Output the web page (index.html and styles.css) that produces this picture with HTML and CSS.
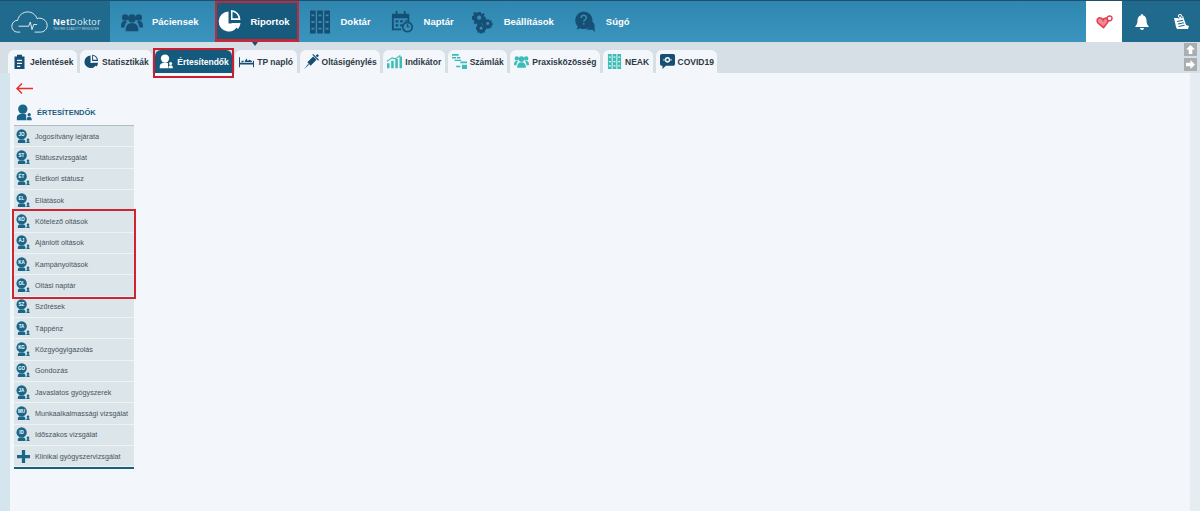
FILE: index.html
```html
<!DOCTYPE html>
<html lang="en">

<head>
	<title>NetDoktor</title>
	<link rel="stylesheet" href="styles.css">
</head>

<body>
	<svg class="defs" width="0" height="0">
		<symbol id="person" viewBox="0 0 20 20">
			<circle cx="8" cy="6" r="5.500" />
			<path d="M1 19v-3c0-3 3-4.500 7-4.500 2 0 3 .3 4 .8V19z" />
			<circle cx="15.500" cy="12.500" r="2" />
			<path d="M12.500 19c0-3 1-4 3-4s3 1 3 4z" />
		</symbol>
		<symbol id="badge" viewBox="0 0 16 16">
			<circle cx="6" cy="5.800" r="5.500" />
			<path d="M2 15v-1.500c0-1.500 1-2 2-2.200h4c1 .2 2 .7 2 2.200V15z" />
			<circle cx="12.800" cy="11.500" r="1.400" />
			<path d="M11 15c0-1.500.6-2.300 1.800-2.300s1.800.8 1.800 2.300z" />
		</symbol>
		<symbol id="people" viewBox="0 0 24 20">
			<circle cx="12" cy="6" r="4.500" />
			<circle cx="4.500" cy="5" r="3.500" />
			<circle cx="19.500" cy="5" r="3.500" />
			<path d="M5 20c0-6 2-9 7-9s7 3 7 9z" />
			<path d="M0 16c0-5 1-7 4.500-7 1 0 1.500.2 2 .5C4.500 12 4 14 4 16zM24 16c0-5-1-7-4.500-7-1 0-1.500.2-2 .5 2 2.500 2.500 4.500 2.500 6.500z" />
		</symbol>
		<symbol id="pie" viewBox="0 0 24 24">
			<path d="M10.500 2.500a10 10 0 1 0 10 12h-10z" />
			<path d="M13 1a10 10 0 0 1 9.500 10H13zM14.500 2.800V9.300H20.500A8 8 0 0 0 14.500 2.800z" fill-rule="evenodd" />
			<path d="M13 14h9.500a10 10 0 0 1-2.500 6z" />
		</symbol>
		<symbol id="binders" viewBox="0 0 21 24">
			<path d="M0 0h6v24H0zM1.500 4v2h3V4zM1.500 11v2h3v-2zM1.500 18v2h3v-2zM7.500 0h6v24h-6zM9 4v2h3V4zM9 11v2h3v-2zM9 18v2h3v-2zM15 0h6v24h-6zM16.500 4v2h3V4zM16.500 11v2h3v-2zM16.500 18v2h3v-2z" fill-rule="evenodd" />
		</symbol>
		<symbol id="calendar" viewBox="0 0 24 24">
			<path d="M1 3h4V0h2v3h7V0h2v3h4v9h-2V8H3v11h8v2H1z" />
			<path d="M5 10h3v2.500H5zM10 10h3v2.500h-3zM15 10h3v1.500h-3zM5 14.500h3V17H5zM10 14.500h3V17h-3z" />
			<path d="M18 11.500a6 6 0 1 0 .01 0zM18 13.300a4.200 4.200 0 1 1-.01 0zM17.300 14.500v3.300h3v-1.300h-1.600v-2z" fill-rule="evenodd" />
		</symbol>
		<symbol id="gear" viewBox="0 0 24 24">
			<path d="M8.500 0h7l.6 3.200 1.900.9 2.700-1.800 3 3-1.800 2.700.9 1.900 3.200.6v7l-3.200.6-.9 1.900 1.800 2.700-3 3-2.700-1.800-1.900.9-.6 3.200h-7l-.6-3.200-1.900-.9-2.700 1.800-3-3 1.800-2.700-.9-1.900L-3 15.500v-7l3.200-.6.9-1.900-1.800-2.700 3-3L8 2.100l.5-.2zM12 7.500a4.500 4.500 0 1 0 .01 0z" transform="translate(2.400 2.400) scale(.8)" fill-rule="evenodd" />
		</symbol>
		<symbol id="help" viewBox="0 0 24 24">
			<path d="M18 10.500c1 2.500 0 6-2.500 8-1 .8-2 1.300-3 1.500l2 .8h5.500l3 2.700-.8-4.500c1.200-3-.5-7-4.200-8.500z" />
			<path d="M10 0a10 10 0 0 1 0 20c-1.500 0-3-.3-4-1l-4 1.500 1.200-3.500A10 10 0 0 1 10 0z" />
			<path d="M7 7.500c0-2 1.300-3 3-3s3 1 3 2.700c0 2.300-3 2.300-3 4.500M10 13v2" fill="none" stroke="#3a94bd" stroke-width="1.400" />
		</symbol>
		<symbol id="doc" viewBox="0 0 14 18">
			<path d="M1 3h3V1h6v2h3v15H1zM4 7v1.500h6V7zM4 10.500V12h6v-1.500zM4 14v1.500h4V14z" fill-rule="evenodd" />
		</symbol>
		<symbol id="bed" viewBox="0 0 18 14">
			<path d="M0 2h1.200v6.500h15.600V6H18v8h-1.200v-3.500H1.200V14H0z" />
			<path d="M3 6h2.500v2H3zM7 6.500l2-3 1.500 3 2-1.500 3 1.500v1H7z" />
		</symbol>
		<symbol id="syringe" viewBox="0 0 18 18">
			<path d="M0 18l5-6 1 1zM4 10l7-7 4 4-7 7zM10 1l1-1 7 7-1 1zM14 2l2-2 2 2-2 2z" />
		</symbol>
		<symbol id="chart" viewBox="0 0 18 16">
			<path d="M0 10h3v6H0zM5 7h3v9H5zM10 5h3v11h-3zM15 2h3v14h-3zM0 7l6-4 4 1 6-4v1.500l-6 4-4-1-6 4z" />
		</symbol>
		<symbol id="bills" viewBox="0 0 18 18">
			<path d="M0 0h8v2H0zM0 3.500h5v2H0zM6 3.500h4v2H6zM3 7h8v1.500H3zM10 9h8v2h-8zM5 14h5v2H5zM12 13h6v5h-6z" />
		</symbol>
		<symbol id="chat" viewBox="0 0 18 18">
			<path d="M2 0h14a2 2 0 0 1 2 2v10a2 2 0 0 1-2 2H7l-4 4v-4H2a2 2 0 0 1-2-2V2a2 2 0 0 1 2-2zM9 3.500a3.500 3.500 0 1 0 .01 0zM9 5.500a1.500 1.500 0 1 1-.01 0zM4 6.200v1.500h2V6.200zM12 6.200v1.500h2V6.200z" fill-rule="evenodd" />
		</symbol>
	</svg>

	<!-- Top menu -->
	<header class="topbar">
		<a class="logo">
			<svg class="logo-cloud" viewBox="0 0 44 26" fill="none" stroke="#fff" stroke-width="1">
				<path d="M11 25H8C3 25 1 21 1 18c0-4 3-7 7-7 1-6 6-10 12-10 5 0 9 3 11 8 1-.5 2-.5 3-.5 5 0 9 4 9 8.500 0 5-4 8-8 8H28" />
				<path d="M9 18h12l2-5 2 9 2-6h4" />
			</svg>
			<span class="logo-text">
				<span class="logo-name"><b>Net</b>Doktor</span>
				<span class="logo-sub">TESTRE SZABOTT RENDSZER</span>
			</span>
		</a>
		<nav class="menu">
			<a class="menu-item menu-paciens"><svg class="menu-icon"><use href="#people" /></svg>Páciensek</a>
			<a class="menu-item menu-active"><svg class="menu-icon"><use href="#pie" /></svg>Riportok</a>
			<a class="menu-item menu-doktar"><svg class="menu-icon"><use href="#binders" /></svg>Doktár</a>
			<a class="menu-item menu-naptar"><svg class="menu-icon"><use href="#calendar" /></svg>Naptár</a>
			<a class="menu-item menu-beall">
				<svg class="menu-icon" viewBox="0 0 22 24">
					<use href="#gear" width="15" height="15" x="0" y="0" />
					<use href="#gear" width="11" height="11" x="11" y="8" />
					<use href="#gear" width="11" height="11" x="4" y="13" />
				</svg>Beállítások</a>
			<a class="menu-item menu-sugo"><svg class="menu-icon"><use href="#help" /></svg>Súgó</a>
		</nav>
		<div class="top-right">
			<a class="top-white">
				<svg class="heart" viewBox="0 0 18 14" fill="none" stroke="#e5394c" stroke-width="1.500">
					<path d="M8 13L2 8C0 5 2 2 4.500 2.500 6 2.500 7 4 7.500 5 8 3.500 9.500 2.500 11 3c2 1 2 3 1 5z" fill="#e5394c" fill-opacity=".6" />
					<path d="M10 4l3-3c1.500-1 4 0 4 2s-2 3-3.500 2.500L12 7" />
				</svg>
			</a>
			<a class="top-dark">
				<svg class="bell" viewBox="0 0 14 16" fill="#fff">
					<path d="M7 0c1 0 1 .8 1 1.200 2.500.6 3.500 2.800 3.500 5.300 0 3 1 4.500 2.500 6.500H0c1.500-2 2.500-3.500 2.500-6.500C2.500 4 3.500 1.800 6 1.200 6 .8 6 0 7 0zM5 14h4c0 1-1 2-2 2s-2-1-2-2z" />
				</svg>
			</a>
			<a class="top-dark">
				<svg class="note" viewBox="0 0 16 16" fill="#fff">
					<path d="M1 4l9-2 3 9 3 1-1 3H4l-1-2zM5 2.500a2 2 0 0 1 4-1L9.500 4l-1 .2-.5-2.500a1 1 0 0 0-2 .5L6.500 4.500l-1 .2zM4 7l.2 1 6-1.300-.2-1zM4.800 9.500l.2 1 6-1.300-.2-1zM5.500 12l.2 1 6-1.300-.2-1z" fill-rule="evenodd" />
				</svg>
			</a>
		</div>
	</header>

	<!-- Tabs -->
	<div class="tabbar">
		<a class="tab"><svg class="tab-icon dark"><use href="#doc" /></svg>Jelentések</a>
		<a class="tab"><svg class="tab-icon dark"><use href="#pie" /></svg>Statisztikák</a>
		<a class="tab tab-active"><svg class="tab-icon white"><use href="#person" /></svg>Értesítendők</a>
		<a class="tab"><svg class="tab-icon dark"><use href="#bed" /></svg>TP napló</a>
		<a class="tab"><svg class="tab-icon dark"><use href="#syringe" /></svg>Oltásigénylés</a>
		<a class="tab"><svg class="tab-icon teal"><use href="#chart" /></svg>Indikátor</a>
		<a class="tab"><svg class="tab-icon teal"><use href="#bills" /></svg>Számlák</a>
		<a class="tab"><svg class="tab-icon teal"><use href="#people" /></svg>Praxisközösség</a>
		<a class="tab"><svg class="tab-icon teal"><use href="#binders" /></svg>NEAK</a>
		<a class="tab"><svg class="tab-icon dark"><use href="#chat" /></svg>COVID19</a>
		<div class="tab-scroll">
			<span class="scroll-btn">
				<svg viewBox="0 0 10 10" fill="#fff"><path d="M5 0l5 5H7v5H3V5H0z" /></svg>
			</span>
			<span class="scroll-btn">
				<svg viewBox="0 0 10 10" fill="#fff"><path d="M5 0l5 5-5 5V7H0V3h5z" /></svg>
			</span>
		</div>
	</div>

	<!-- Content -->
	<main class="content">
		<svg class="back" viewBox="0 0 17 11" fill="none" stroke="#e8302a" stroke-width="1.500">
			<path d="M6 .5L1 5.500l5 5M1 5.500h16" />
		</svg>
		<div class="side-title">
			<svg class="title-icon"><use href="#person" /></svg>
			<span>ÉRTESÍTENDŐK</span>
		</div>
		<div class="side-list">
			<a class="row"><span class="ico"><svg><use href="#badge" /></svg><i>JO</i></span>Jogosítvány lejárata</a>
			<a class="row"><span class="ico"><svg><use href="#badge" /></svg><i>ST</i></span>Státuszvizsgálat</a>
			<a class="row"><span class="ico"><svg><use href="#badge" /></svg><i>ÉT</i></span>Életkori státusz</a>
			<a class="row"><span class="ico"><svg><use href="#badge" /></svg><i>EL</i></span>Ellátások</a>
			<div class="row-group">
				<a class="row"><span class="ico"><svg><use href="#badge" /></svg><i>KÖ</i></span>Kötelező oltások</a>
				<a class="row"><span class="ico"><svg><use href="#badge" /></svg><i>AJ</i></span>Ajánlott oltások</a>
				<a class="row"><span class="ico"><svg><use href="#badge" /></svg><i>KA</i></span>Kampányoltások</a>
				<a class="row"><span class="ico"><svg><use href="#badge" /></svg><i>OL</i></span>Oltási naptár</a>
			</div>
			<a class="row"><span class="ico"><svg><use href="#badge" /></svg><i>SZ</i></span>Szűrések</a>
			<a class="row"><span class="ico"><svg><use href="#badge" /></svg><i>TA</i></span>Táppénz</a>
			<a class="row"><span class="ico"><svg><use href="#badge" /></svg><i>KG</i></span>Közgyógyigazolás</a>
			<a class="row"><span class="ico"><svg><use href="#badge" /></svg><i>GO</i></span>Gondozás</a>
			<a class="row"><span class="ico"><svg><use href="#badge" /></svg><i>JA</i></span>Javaslatos gyógyszerek</a>
			<a class="row"><span class="ico"><svg><use href="#badge" /></svg><i>MU</i></span>Munkaalkalmassági vizsgálat</a>
			<a class="row"><span class="ico"><svg><use href="#badge" /></svg><i>ID</i></span>Időszakos vizsgálat</a>
			<a class="row"><span class="ico"><svg class="plus" viewBox="0 0 12 12"><path d="M4.500 0h3v4.500H12v3H7.500V12h-3V7.500H0v-3h4.500z" /></svg></span>Klinikai gyógyszervizsgálat</a>
		</div>
	</main>
</body>

</html>
```

FILE: styles.css
```css
/* Page */
html,
body {
	height: 100%;
}

body {
	margin: 0;
	font-family: "Liberation Sans", Arial, sans-serif;
	background-color: #f3f6fb;
	overflow: hidden;
	display: flex;
	flex-direction: column;
}

.defs {
	display: block;
	height: 0;
}

/* Top menu */
.topbar {
	display: flex;
	height: 42px;
	flex: none;
	background: linear-gradient(#2f87b0, #3a94bd);
	border-top: 1px solid #1f4f6e;
	box-sizing: border-box;
	position: relative;
	z-index: 1;
}

.logo {
	width: 110px;
	flex: none;
	display: flex;
	align-items: center;
	gap: 5px;
	padding-left: 11px;
	box-sizing: border-box;
	background-color: #1f6a8d;
	color: #fff;
}

.logo-cloud {
	width: 37px;
	height: 22px;
	flex: none;
}

.logo-text {
	display: flex;
	flex-direction: column;
	margin-top: 3px;
}

.logo-name {
	font-size: 9.5px;
	letter-spacing: .5px;
	color: #d7e6ee;
}

.logo-name b {
	color: #fff;
}

.logo-sub {
	font-size: 3px;
	letter-spacing: .1px;
	color: #bcd3df;
	white-space: nowrap;
}

.menu {
	display: flex;
	flex: 1;
	padding-left: 11px;
}

.menu-item {
	display: flex;
	align-items: center;
	gap: 11px;
	margin-right: 20px;
	color: #fff;
	font-size: 9.5px;
	font-weight: bold;
}

.menu-icon {
	width: 22px;
	height: 24px;
	fill: #174f74;
}

.menu-paciens {
	gap: 9px;
	margin-right: 17px;
}

.menu-active {
	width: 84px;
	height: 41px;
	box-sizing: border-box;
	padding-left: 1px;
	margin-right: 11px;
	gap: 8px;
	background-color: #165a7d;
	border: 2px solid #c22a3a;
	border-bottom-width: 3px;
	position: relative;
}

.menu-active .menu-icon {
	width: 24px;
	height: 24px;
	fill: #fff;
}

/* Little pointer under the active menu */
.menu-active::after {
	content: "";
	position: absolute;
	left: 35px;
	bottom: -10px;
	border: 3px solid transparent;
	border-top: 4px solid #1f4f6e;
}

.menu-doktar {
	gap: 10px;
}

.menu-doktar .menu-icon {
	width: 20px;
}

.menu-naptar {
	margin-right: 18px;
}

.menu-beall {
	margin-right: 21px;
}

.menu-beall .menu-icon,
.menu-sugo .menu-icon {
	width: 21px;
}

.menu-sugo {
	gap: 10px;
}

.top-right {
	display: flex;
	flex: none;
}

.top-white,
.top-dark {
	display: flex;
	align-items: center;
	justify-content: center;
}

.top-white {
	width: 36px;
	background-color: #fff;
}

.top-dark {
	width: 39px;
	background-color: #1f6a8d;
}

.heart {
	width: 17px;
	height: 14px;
}

.bell {
	width: 14px;
	height: 16px;
}

.note {
	width: 16px;
	height: 16px;
}

/* Tabs */
.tabbar {
	display: flex;
	align-items: flex-end;
	flex: none;
	gap: 3px;
	height: 31px;
	padding-left: 8px;
	background-color: #d5dfe5;
	position: relative;
}

.tab {
	display: flex;
	align-items: center;
	gap: 3px;
	height: 23px;
	box-sizing: border-box;
	padding: 0 3.500px 0 4px;
	background-color: #f3f6fb;
	border-radius: 6px 6px 0 0;
	color: #2d3a45;
	font-size: 8.5px;
	font-weight: bold;
	white-space: nowrap;
}

.tab-active {
	position: relative;
	background-color: #15597c;
	color: #fff;
}

/* Red marker round the active tab */
.tab-active::after {
	content: "";
	position: absolute;
	inset: -2px -2px -5px;
	border: 2px solid #c8202f;
}

.tab-icon {
	width: 15px;
	height: 15px;
}

.dark {
	fill: #174f74;
}

.white {
	fill: #fff;
}

.teal {
	fill: #3bbcb4;
}

.tab-scroll {
	position: absolute;
	right: 3px;
	top: 1px;
	display: flex;
	flex-direction: column;
	gap: 2px;
}

.scroll-btn {
	display: flex;
	align-items: center;
	justify-content: center;
	width: 13px;
	height: 13px;
	background-color: #a9aeb1;
}

.scroll-btn svg {
	width: 9px;
	height: 9px;
}

/* Content */
.content {
	flex: 1;
	margin: 0 10px;
	padding: 10px 0 0 4px;
	box-shadow: -10px 0 0 #d5e5ee, 10px 0 0 #e6edf2;
}

.back {
	display: block;
	width: 17px;
	height: 11px;
	margin-left: 2px;
}

.side-title {
	display: flex;
	align-items: center;
	gap: 4px;
	height: 26px;
	margin-top: 5px;
	padding-left: 2px;
	color: #1d5d7e;
	font-size: 7.5px;
	font-weight: bold;
}

.title-icon {
	width: 17px;
	height: 17px;
	fill: #1a6688;
}

/* Side list */
.side-list {
	width: 120px;
	background-color: #dbe5ea;
	border-top: 1px solid #aebdc6;
	border-bottom: 2px solid #1d5d7e;
}

.row {
	display: flex;
	align-items: center;
	gap: 4px;
	height: 21.33px;
	box-sizing: border-box;
	padding-left: 2px;
	border-bottom: 1px solid #eef3f6;
	color: #4a545c;
	font-size: 7.2px;
	white-space: nowrap;
}

.row-group {
	outline: 2px solid #cf2431;
}

.ico {
	position: relative;
	width: 15px;
	height: 15px;
	flex: none;
}

.ico svg {
	display: block;
	width: 15px;
	height: 15px;
	fill: #1a6688;
}

.ico svg.plus {
	width: 13px;
	height: 13px;
	margin: 1px;
}

.ico i {
	position: absolute;
	left: 0;
	top: 1px;
	width: 11px;
	text-align: center;
	color: #fff;
	font-size: 4.5px;
	font-style: normal;
	font-weight: bold;
	line-height: 9px;
}
```
